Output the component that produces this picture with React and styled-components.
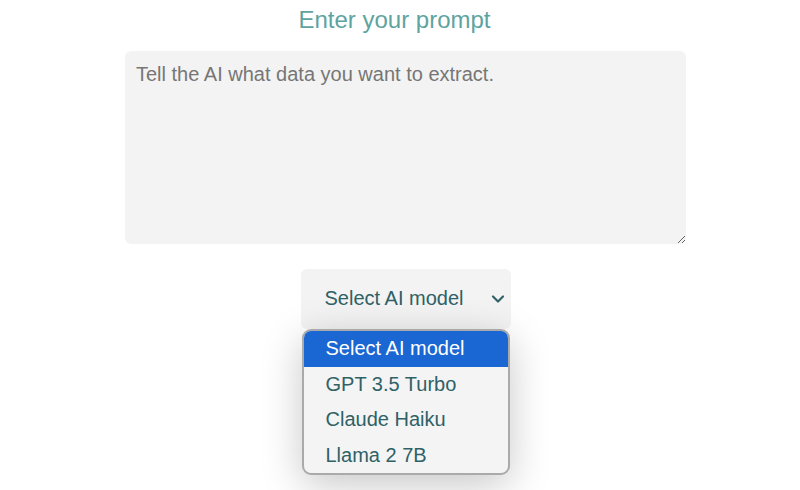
import React, { useState } from 'react'
import styled, { createGlobalStyle } from 'styled-components'
import { ChevronDown } from 'lucide-react'

const GlobalStyle = createGlobalStyle`
  html, body {
    margin: 0;
    padding: 0;
    background: #fff;
    font-family: "Liberation Sans", Arial, sans-serif;
  }
`

const models = ['Select AI model', 'GPT 3.5 Turbo', 'Claude Haiku', 'Llama 2 7B']

const App = () => {
  const [prompt, setPrompt] = useState('')
  const [active] = useState(0)

  return (
    <Wrapper>
      <GlobalStyle />
      <Title>Enter your prompt</Title>
      <PromptInput
        placeholder="Tell the AI what data you want to extract."
        value={prompt}
        onChange={e => { setPrompt(e.target.value) }}
      />
      <SelectWrap>
        <SelectButton type="button">
          Select AI model
          <ChevronDown size={20} strokeWidth={2.6} />
        </SelectButton>
        <Menu>
          {models.map((m, i) => (
            <Option key={m} active={i === active ? 1 : 0}>{m}</Option>
          ))}
        </Menu>
      </SelectWrap>
    </Wrapper>
  )
}

const Wrapper = styled.main`
  display: flex;
  flex-direction: column;
  align-items: center;
  padding: 6px 0 0 11px;
  height: 490px;
  box-sizing: border-box;
  overflow: hidden;
`

const Title = styled.h2`
  margin: 0 22px 0 0;
  font-size: 24px;
  font-weight: 400;
  line-height: 27px;
  color: #5fa3a0;
`

const PromptInput = styled.textarea`
  margin-top: 18px;
  width: 561px;
  height: 193px;
  box-sizing: border-box;
  padding: 12px 11px;
  border: none;
  border-radius: 6px;
  background: #f3f3f3;
  font-family: "Liberation Sans", Arial, sans-serif;
  font-size: 20px;
  color: #333;
  outline: none;
  &::placeholder {
    color: #767676;
  }
`

const SelectWrap = styled.div`
  position: relative;
  margin-top: 25px;
`

const SelectButton = styled.button`
  display: flex;
  align-items: center;
  justify-content: space-between;
  width: 210px;
  height: 60px;
  padding: 0 3px 2px 24px;
  box-sizing: border-box;
  border: none;
  border-radius: 6px;
  background: #f3f3f3;
  font-family: "Liberation Sans", Arial, sans-serif;
  font-size: 20px;
  color: #2f6167;
  svg {
    color: #2f6167;
    margin-top: 2px;
  }
`

const Menu = styled.ul`
  position: absolute;
  top: 60px;
  left: 1px;
  width: 208px;
  margin: 0;
  padding: 0;
  list-style: none;
  box-sizing: border-box;
  border: 2px solid #aaa;
  border-radius: 9px;
  background: #f4f4f4;
  overflow: hidden;
  box-shadow: 0 10px 40px rgba(0, 0, 0, 0.22);
`

const Option = styled.li`
  height: 35.5px;
  line-height: 35.5px;
  padding-left: 22px;
  font-size: 20px;
  color: ${({ active }) => (active ? '#fff' : '#2f6167')};
  background: ${({ active }) => (active ? '#1a66d2' : 'transparent')};
`

export default App
